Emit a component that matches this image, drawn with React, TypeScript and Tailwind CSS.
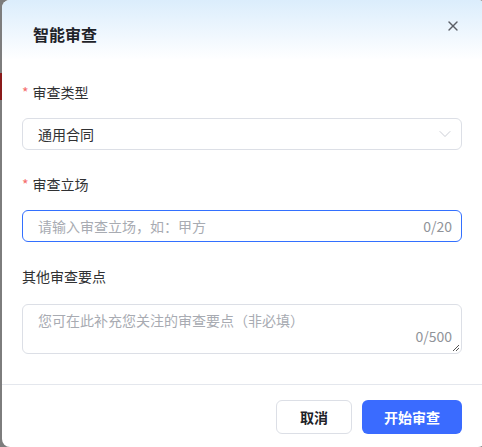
import { X, ChevronDown } from 'lucide-react';

const font = { fontFamily: '"Noto Sans CJK SC", "Noto Sans", sans-serif' };

export default function App() {
  return (
    <div className="relative w-[482px] h-[447px] overflow-hidden bg-[#7d7d7d]" style={font}>
      {/* backdrop red hint */}
      <div className="absolute left-0 top-[73px] w-[3px] h-[27px] bg-[#8a1a1a]" />

      {/* Dialog */}
      <div className="relative ml-[2px] w-[484px] h-[447px] rounded-[8px] bg-white overflow-hidden">
        {/* Header */}
        <div className="relative h-[60px] bg-gradient-to-b from-[#dbedfc] to-white pt-[23px] pl-[31px]">
          <h2 className="text-[16px] leading-[22px] font-bold text-[#1f2329]">智能审查</h2>
          <button className="absolute right-[25px] top-[18px] text-[#5b5f66]">
            <X className="h-[16px] w-[16px]" strokeWidth={2} />
          </button>
        </div>

        {/* Body */}
        <div className="px-[20px] pt-[21px] w-[480px]">
          <div className="flex items-center h-[22px] text-[14px] text-[#303133]">
            <span className="text-[#f56c6c] mr-[4px] text-[14px]">*</span>
            审查类型
          </div>
          <div className="mt-[15px] h-[32px] flex items-center justify-between border border-[#dcdfe6] rounded-[6px] pl-[15px] pr-[6px] text-[14px] text-[#303133]">
            <span>通用合同</span>
            <ChevronDown className="h-[20px] w-[20px] text-[#c0c4cc]" strokeWidth={1} />
          </div>

          <div className="mt-[23px] flex items-center h-[22px] text-[14px] text-[#303133]">
            <span className="text-[#f56c6c] mr-[4px] text-[14px]">*</span>
            审查立场
          </div>
          <div className="mt-[15px] h-[32px] flex items-center justify-between border border-[#3370ff] rounded-[6px] pl-[15px] pr-[9px] text-[14px]">
            <span className="text-[#a8abb2]">请输入审查立场，如：甲方</span>
            <span className="text-[14px] text-[#909399]">0/20</span>
          </div>

          <div className="mt-[23px] flex items-center h-[22px] text-[14px] text-[#303133]">其他审查要点</div>
          <div className="relative mt-[17px] h-[50px] border border-[#dcdfe6] rounded-[6px] pl-[15px] pr-[9px] pt-[4px] text-[14px]">
            <div className="leading-[22px] text-[#a8abb2]">您可在此补充您关注的审查要点（非必填）</div>
            <div className="absolute right-[9px] bottom-[9px] text-[14px] leading-[16px] text-[#909399]">0/500</div>
            <svg className="absolute right-[1px] bottom-[1px]" width="8" height="8" viewBox="0 0 8 8">
              <path d="M7 1L1 7M7 4L4 7" stroke="#555" strokeWidth="1" />
            </svg>
          </div>
        </div>

        {/* Footer */}
        <div className="mt-[30px] border-t border-[#e4e7ed] w-[480px]">
          <div className="flex justify-end gap-[10px] pt-[15px] pr-[20px]">
            <button className="h-[34px] w-[76px] rounded-[6px] border border-[#dcdfe6] bg-white text-[14px] font-bold text-[#1f2329]">
              取消
            </button>
            <button className="h-[34px] w-[100px] rounded-[6px] bg-[#3a6bff] text-[14px] font-bold text-white">
              开始审查
            </button>
          </div>
        </div>
      </div>
    </div>
  );
}
